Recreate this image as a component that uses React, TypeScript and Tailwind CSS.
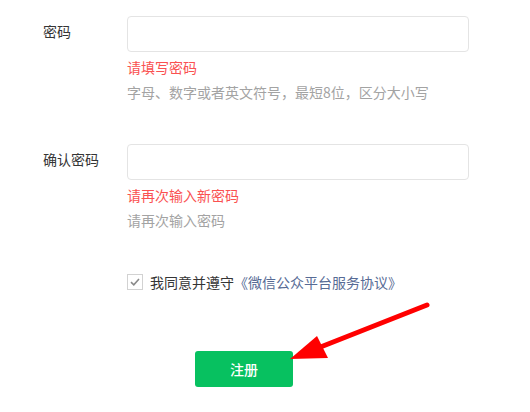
import React from "react";

const font = { fontFamily: '"Noto Sans CJK SC", "Noto Sans", sans-serif' };

function Field({ label, error, hint }: { label: string; error: string; hint: string }) {
  return (
    <div className="flex">
      <div className="w-[84px] shrink-0 text-[14px] leading-[30px] text-[#353535]">{label}</div>
      <div className="w-[342px]">
        <input
          type="password"
          className="block h-[36px] w-full rounded-[4px] border border-[#e4e4e4] bg-white px-3 text-[14px] outline-none"
        />
        <div className="mt-[5px] text-[14px] leading-[20px] text-[#fa5151]">{error}</div>
        <div className="mt-[5px] text-[14px] leading-[20px] text-[#a3a3a3]">{hint}</div>
      </div>
    </div>
  );
}

export default function App() {
  return (
    <div className="relative h-[412px] w-[530px] overflow-hidden bg-white" style={font}>
      <div className="flex flex-col pl-[43px] pt-[16px]">
        <Field label="密码" error="请填写密码" hint="字母、数字或者英文符号，最短8位，区分大小写" />
        <div className="mt-[42px]">
          <Field label="确认密码" error="请再次输入新密码" hint="请再次输入密码" />
        </div>

        {/* Agreement */}
        <div className="ml-[84px] mt-[42px] flex h-[20px] items-center">
          <span className="flex h-[16px] w-[16px] items-center justify-center border border-[#d2d2d2] bg-white">
            <svg width="10" height="8" viewBox="0 0 10 8" fill="none">
              <path d="M1 4.2 L3.8 6.8 L9 1" stroke="#8a8a8a" strokeWidth="1.6" />
            </svg>
          </span>
          <span className="ml-[7px] text-[14px] leading-[20px] text-[#353535]">
            我同意并遵守<span className="text-[#576b95]">《微信公众平台服务协议》</span>
          </span>
        </div>

        {/* Submit */}
        <div className="ml-[152px] mt-[59px]">
          <button className="h-[36px] w-[98px] rounded-[3px] bg-[#07c160] text-[14px] font-medium text-white">
            注册
          </button>
        </div>
      </div>

      {/* Annotation arrow */}
      <svg className="pointer-events-none absolute left-0 top-0" width="530" height="412">
        <line x1="427" y1="305" x2="318" y2="348" stroke="#ff0000" strokeWidth="5" strokeLinecap="round" />
        <polygon points="290,359 317,336 328,358" fill="#ff0000" />
      </svg>
    </div>
  );
}
